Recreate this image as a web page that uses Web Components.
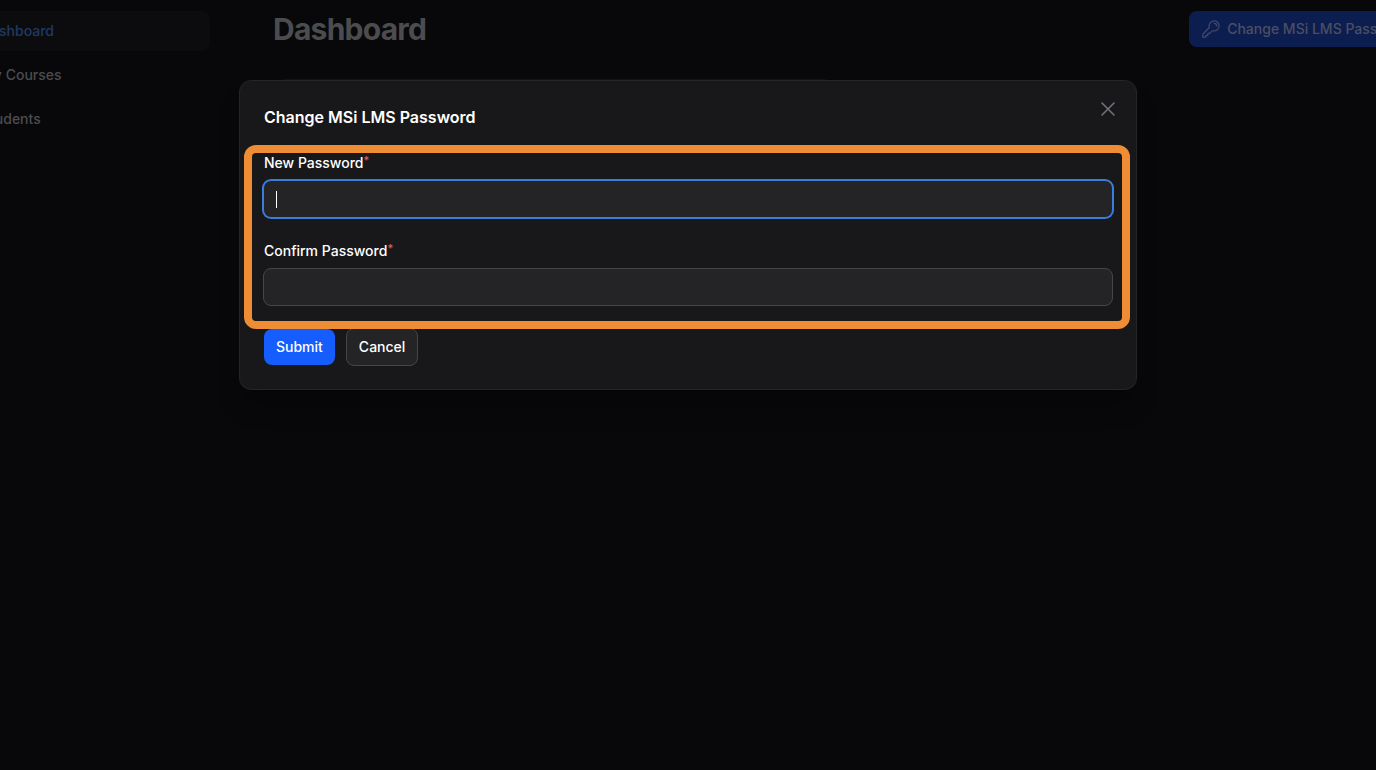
<!DOCTYPE html>
<html lang="en">
<head>
<meta charset="utf-8">
<title>Dashboard</title>
<style>
body { margin: 0; background: #08080a; color: #fff; font: 500 14px/20px Inter, "Noto Sans", sans-serif; }
</style>
</head>
<body>
<app-shell>
  <side-nav slot="nav">
    <nav-link active>Dashboard</nav-link>
    <nav-link>My Courses</nav-link>
    <nav-link>Students</nav-link>
  </side-nav>
  <page-header heading="Dashboard">Change MSi LMS Password</page-header>
  <widget-card></widget-card>
  <modal-dialog slot="modal" heading="Change MSi LMS Password">
    <field-group>
      <password-field label="New Password" active></password-field>
      <password-field label="Confirm Password"></password-field>
    </field-group>
    <action-button slot="actions" primary>Submit</action-button>
    <action-button slot="actions">Cancel</action-button>
  </modal-dialog>
</app-shell>
<script>
const define = (name, render) => customElements.define(name, class extends HTMLElement {
  constructor() { super(); this.attachShadow({ mode: "open" }); }
  connectedCallback() {
    const t = document.createElement("template");
    t.innerHTML = "<style>*{box-sizing:border-box}button,input{font:inherit;margin:0}</style>" + render(this);
    this.shadowRoot.replaceChildren(t.content.cloneNode(true));
  }
});

define("app-shell", () => `
<style>
:host { display: flex; position: relative; min-height: 100vh; overflow: hidden; }
main { flex: 1; min-width: 0; padding: 8px 0 0 63px; }
</style>
<slot name="nav"></slot><main><slot></slot></main><slot name="modal"></slot>`);

define("side-nav", () => `
<style>
:host { display: block; flex: none; width: 272px; margin-left: -62px; padding-top: 11px; }
nav { display: flex; flex-direction: column; gap: 4px; }
</style>
<nav><slot></slot></nav>`);

define("nav-link", () => `
<style>
:host { display: block; color: #4c4c50; font-size: 14px; }
:host([active]) { color: #1f3a62; }
a { display: block; padding: 10px 0 10px 43px; border-radius: 8px; color: inherit; text-decoration: none; }
:host([active]) a { background: #0c0c0f; }
</style>
<a href="#"><slot></slot></a>`);

define("page-header", el => `
<style>
:host { display: flex; justify-content: space-between; align-items: center; margin-right: -47px; }
h1 { margin: 0; font-size: 30px; line-height: 42px; font-weight: 700; letter-spacing: -0.025em; color: #4c4c4e; }
button { display: flex; align-items: center; gap: 6px; height: 36px; padding: 0 12px; border: 0; border-radius: 8px; background: #0c1d50; color: #4b4f61; white-space: nowrap; }
svg { width: 20px; height: 20px; color: #434965; }
</style>
<h1>${el.getAttribute("heading")}</h1>
<button type="button"><svg viewBox="0 0 24 24" fill="none" stroke="currentColor" stroke-width="1.5" stroke-linecap="round" stroke-linejoin="round" aria-hidden="true"><path d="M15.75 5.25a3 3 0 0 1 3 3m3 0a6 6 0 0 1-7.029 5.912c-.563-.097-1.159.026-1.563.43L10.5 17.25H8.25v2.25H6v2.25H2.25v-2.818c0-.597.237-1.17.659-1.591l6.499-6.499c.404-.404.527-1 .43-1.563A6 6 0 1 1 21.75 8.25Z"/></svg><slot></slot></button>`);

define("widget-card", () => `
<style>
:host { display: block; box-sizing: border-box; width: 51%; height: 96px; margin-top: 29px; border: 1px solid #131315; border-radius: 12px; background: #0a0a0c; }
</style>`);

define("modal-dialog", el => `
<style>
:host { position: absolute; inset: 0; display: flex; justify-content: center; align-items: flex-start; padding: 80px 24px 24px; }
section { position: relative; width: 100%; max-width: 898px; padding: 23px; border: 1px solid #252528; border-radius: 12px; background: #18181a; box-shadow: 0 20px 25px -5px #0000004d; }
h2 { margin: 0 0 22px; padding-left: 1px; font-size: 16px; line-height: 26px; font-weight: 600; }
.close { position: absolute; top: 16px; right: 16px; width: 24px; height: 24px; padding: 0; border: 0; background: none; color: #74747c; }
svg { display: block; width: 24px; height: 24px; }
footer { display: flex; align-items: center; gap: 11px; margin-top: 22px; padding-left: 1px; }
</style>
<section role="dialog" aria-labelledby="title">
<button class="close" type="button" aria-label="Close"><svg viewBox="0 0 24 24" fill="none" stroke="currentColor" stroke-width="1.5" stroke-linecap="round" aria-hidden="true"><path d="M6 18 18 6M6 6l12 12"/></svg></button>
<h2 id="title">${el.getAttribute("heading")}</h2>
<slot></slot>
<footer><slot name="actions"></slot></footer>
</section>`);

define("field-group", () => `
<style>
:host { display: grid; gap: 22px; position: relative; }
.frame { position: absolute; inset: -7px -17px -23px -19px; border: 8px solid #ee8d33; border-radius: 12px; pointer-events: none; z-index: 1; }
</style>
<slot></slot><div class="frame"></div>`);

define("password-field", el => `
<style>
:host { display: grid; gap: 6px; }
label { padding-left: 1px; font-size: 14px; line-height: 22px; }
sup { font-size: 11px; line-height: 0; vertical-align: 4px; color: #e0606a; }
.box { position: relative; display: grid; }
input { width: 100%; height: 38px; padding: 0 12px; border: 1px solid #464649; border-radius: 8px; outline: 0; background: #242426; color: #fff; }
:host([active]) input { border-color: #3b7ddd; box-shadow: 0 0 0 1px #3b7ddd; }
.caret { display: none; position: absolute; left: 13px; top: 11px; width: 1px; height: 17px; background: #fff; }
:host([active]) .caret { display: block; }
</style>
<label for="pw">${el.getAttribute("label")}<sup>*</sup></label>
<div class="box"><input id="pw" type="password" required><i class="caret"></i></div>`);

define("action-button", () => `
<style>
:host { display: block; }
button { height: 38px; padding: 0 12px; border: 1px solid #464649; border-radius: 8px; background: #242426; color: #fff; }
:host([primary]) button { height: 36px; border: 0; background: #155dfc; }
</style>
<button type="button"><slot></slot></button>`);
</script>
</body>
</html>
